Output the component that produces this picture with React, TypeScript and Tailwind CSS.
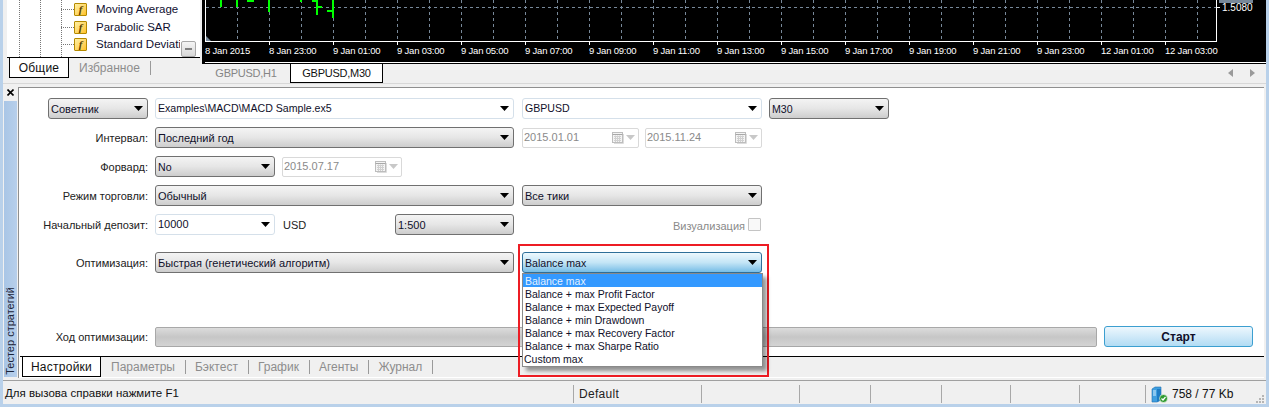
import React from "react";

const FONT = "[font-family:'Liberation_Sans',Arial,sans-serif]";

function Arrow({ color = "#000" }: { color?: string }) {
  return (
    <svg width="9" height="5" viewBox="0 0 9 5" className="shrink-0">
      <path d="M0 0H9L4.5 5Z" fill={color} />
    </svg>
  );
}

function Select({
  w,
  text,
  kind = "select",
}: {
  w: string;
  text: string;
  kind?: "select" | "combo" | "focus";
}) {
  const cls =
    kind === "select"
      ? "border-[#707070] bg-gradient-to-b from-[#f4f4f4] via-[#e6e6e6] to-[#cdcdcd]"
      : kind === "combo"
        ? "border-[#d5e0ea] bg-white"
        : "border-[#2f6f99] bg-gradient-to-b from-[#edf8fd] via-[#c4e5f6] to-[#76bde6]";
  const latin = /^[A-Za-z]/.test(text);
  return (
    <div className={`${w} h-[21px] shrink-0 flex items-center justify-between rounded-[3px] border pl-[2px] pr-[4px] ${cls}`}>
      <span className={`${latin ? "text-[10.6px]" : "text-[11px]"} ${kind === "combo" ? "" : "mt-[2px]"} text-[#10102a] whitespace-nowrap leading-none`}>{text}</span>
      <Arrow />
    </div>
  );
}

function DateBox({ w, text }: { w: string; text: string }) {
  return (
    <div className={`${w} h-[20px] shrink-0 flex items-center justify-between rounded-[2px] border border-[#d9d9d9] bg-white pl-[1px] pr-[3px]`}>
      <span className="text-[11px] text-[#8a8a8a] leading-none">{text}</span>
      <span className="flex items-center gap-[2px]">
        <svg width="12" height="12" viewBox="0 0 12 12">
          <rect x="0.5" y="0.5" width="10" height="10" fill="#f4f4f4" stroke="#bdbdbd" />
          <path d="M0.5 2.5H10.5" stroke="#a8a8a8" />
          <path d="M2 4.5H9M2 6.5H9M2 8.5H9M3.5 3.5V10M5.5 3.5V10M7.5 3.5V10" stroke="#d0d0d0" />
          <path d="M11.5 2V11.5H2" stroke="#dcdcdc" fill="none" />
        </svg>
        <Arrow color="#c8c8c8" />
      </span>
    </div>
  );
}

function Row({ label, children, className = "" }: { label: React.ReactNode; children: React.ReactNode; className?: string }) {
  return (
    <div className={`flex items-center h-[21px] ${className}`}>
      <div className="w-[129px] shrink-0 flex justify-end text-[11px] text-[#222] whitespace-nowrap">
        {typeof label === "string" ? <span className="mt-[2px]">{label}</span> : label}
      </div>
      <div className="ml-[7px] flex items-center">{children}</div>
    </div>
  );
}

function Chart() {
  const ticks: number[] = [];
  for (let x = 237; x <= 1197; x += 32) ticks.push(x);
  const labels: [number, string][] = [
    [205, "8 Jan 2015"],
    [269, "8 Jan 23:00"],
    [333, "9 Jan 01:00"],
    [397, "9 Jan 03:00"],
    [461, "9 Jan 05:00"],
    [525, "9 Jan 07:00"],
    [589, "9 Jan 09:00"],
    [653, "9 Jan 11:00"],
    [717, "9 Jan 13:00"],
    [781, "9 Jan 15:00"],
    [845, "9 Jan 17:00"],
    [909, "9 Jan 19:00"],
    [973, "9 Jan 21:00"],
    [1037, "9 Jan 23:00"],
    [1101, "12 Jan 01:00"],
    [1165, "12 Jan 03:00"],
  ];
  return (
    <svg viewBox="202 0 1064 64" className="block w-[1064px] h-[64px]" shapeRendering="crispEdges">
      <rect x="202" y="0" width="1064" height="64" fill="#000" />
      <path d="M205.5 7.5H1216" stroke="#778899" strokeDasharray="3 3" />
      {ticks.map((x) => (
        <path key={x} d={`M${x + 0.5} 0V41`} stroke="#778899" strokeDasharray="3 3" />
      ))}
      <path d="M205.5 0V41.5H1216.5V0" stroke="#fff" fill="none" />
      <path d="M1216 7.5H1220" stroke="#fff" />
      {labels.map(([x]) => (x > 205 ? <path key={x} d={`M${x + 0.5} 41V45`} stroke="#fff" /> : null))}
      <path d="M206 41V36L211 41Z" fill="#778899" shapeRendering="auto" />
      <g stroke="#00ff00" strokeWidth="2" fill="none">
        <path d="M220.5 0V7M236.5 0V7M247 0.5H254M269 0V12M301 0V2M317 0V15M312 1H317M317 7H322M333 0V18M327 11H333" />
      </g>
      <rect x="1219" y="0" width="34" height="3" fill="#778899" />
      <text x="1222" y="11" fontSize="10" fill="#fff" fontFamily="'Liberation Sans', sans-serif">1.5080</text>
      {labels.map(([x, t]) => (
        <text key={x} x={x} y="54" fontSize="9.5" fill="#fff" fontFamily="'Liberation Sans', sans-serif" letterSpacing="-0.2">{t}</text>
      ))}
      <path d="M205 62.5H1266" stroke="#fff" />
    </svg>
  );
}

function FIcon() {
  return (
    <span className="w-[13px] h-[13px] shrink-0 flex items-center justify-center rounded-[1px] border border-[#b58a00] bg-gradient-to-br from-[#fff0a0] to-[#ffc21a] text-[11px] italic font-bold text-[#5a4200] [font-family:'Liberation_Serif',serif] leading-none">
      f
    </span>
  );
}

function TreeRow({ text }: { text: string }) {
  return (
    <div className="flex items-center h-[17.5px]">
      <span className="w-[13px] border-t border-dotted border-[#777]" />
      <FIcon />
      <span className="ml-[9px] text-[11.5px] text-[#101030] whitespace-nowrap overflow-hidden w-[84px]">{text}</span>
    </div>
  );
}

function Sep() {
  return <span className="inline-block w-px h-[14px] bg-[#9a9a9a]" />;
}

export default function App() {
  const bottomTabs = ["Параметры", "Бэктест", "График", "Агенты", "Журнал"];
  const opts = [
    "Balance max",
    "Balance + max Profit Factor",
    "Balance + max Expected Payoff",
    "Balance + min Drawdown",
    "Balance + max Recovery Factor",
    "Balance + max Sharpe Ratio",
    "Custom max",
  ];
  const dividers = ["w-[98px]", "w-[71px]", "w-[71px]", "w-[69px]", "w-[69px]", "w-[66px]"];
  return (
    <div className={`${FONT} relative w-[1269px] h-[407px] overflow-hidden bg-[#b9d1ea] flex flex-col pl-[3px] pr-[3px] pb-[3px]`}>
      {/* top area */}
      <div className="flex h-[84px] shrink-0 bg-[#f0f0f0] border-b border-[#d8d8d8]">
        <div className="w-[199px] shrink-0 pl-[4px] pr-[2px] flex flex-col">
          <div className="relative h-[58px] bg-white overflow-hidden border-b border-black">
            <span className="absolute left-[12px] top-0 h-full border-l border-dotted border-[#777]" />
            <span className="absolute left-[33px] top-0 h-full border-l border-dotted border-[#777]" />
            <span className="absolute left-[54px] top-0 h-full border-l border-dotted border-[#777]" />
            <div className="pl-[54px] pt-[1px]">
              <TreeRow text="Moving Average" />
              <TreeRow text="Parabolic SAR" />
              <TreeRow text="Standard Deviation" />
            </div>
            <div className="absolute left-[174px] top-[41px] w-[15px] h-[16px] flex items-center justify-center rounded-[2px] border border-[#a8a8a8] bg-gradient-to-b from-[#f5f5f5] to-[#d8d8d8]">
              <span className="w-[7px] h-[2px] bg-[#808080]" />
            </div>
          </div>
          <div className="flex items-center h-[20px] ml-[2px]">
            <div className="w-[60px] h-[20px] bg-white border-x border-b border-black flex items-center justify-center text-[12px] tracking-[0.2px] text-[#111]">
              Общие
            </div>
            <span className="ml-[10px] text-[12px] text-[#8d8d8d]">Избранное</span>
            <span className="ml-[10px] flex"><Sep /></span>
          </div>
        </div>
        <div className="w-[1064px] shrink-0 flex flex-col">
          <Chart />
          <div className="flex h-[19px] items-start">
            <div className="w-[88px] h-[18px] flex items-center justify-center text-[11px] tracking-[-0.25px] text-[#858585]">GBPUSD,H1</div>
            <div className="w-[93px] h-[19px] bg-white border-x border-b border-black flex items-center justify-center text-[11px] tracking-[-0.25px] text-[#111]">GBPUSD,M30</div>
            <div className="ml-auto mr-[11px] h-[18px] flex items-center gap-[17px]">
              <svg width="5" height="8" viewBox="0 0 5 8"><path d="M5 0V8L0 4Z" fill="#9a9a9a" /></svg>
              <svg width="5" height="8" viewBox="0 0 5 8"><path d="M0 0V8L5 4Z" fill="#9a9a9a" /></svg>
            </div>
          </div>
        </div>
      </div>

      {/* tester */}
      <div className="flex-1 flex min-h-0 bg-[#f0f0f0]">
        <div className="w-[15px] shrink-0 flex flex-col">
          <div className="h-[17px] pt-[5px] flex justify-center">
            <svg width="7" height="7" viewBox="0 0 7 7"><path d="M0.5 0.5L6.5 6.5M6.5 0.5L0.5 6.5" stroke="#000" strokeWidth="1.6" /></svg>
          </div>
          <div className="flex-1 ml-[1px] mb-[3px] w-[13px] bg-gradient-to-r from-[#a9c6e6] to-[#b7cfeb] flex items-start justify-center">
            <div className="h-full flex items-end justify-center">
              <span className="[writing-mode:vertical-rl] rotate-180 text-[11px] leading-[13px] text-[#1c2438] whitespace-nowrap pt-[2px]">Тестер стратегий</span>
            </div>
          </div>
        </div>
        <div className="flex-1 flex flex-col mt-[3px] mr-[2px] mb-[2px] min-w-0">
          <div className="flex-1 bg-white border-l border-t border-[#8f8f8f] flex flex-col pt-[10px] min-h-0">
            <Row label={<Select w="w-[100px]" text="Советник" />}>
              <Select w="w-[359px]" text="Examples\MACD\MACD Sample.ex5" kind="combo" />
              <div className="ml-[8px]"><Select w="w-[240px]" text="GBPUSD" kind="combo" /></div>
              <div className="ml-[7px]"><Select w="w-[120px]" text="M30" /></div>
            </Row>
            <Row label="Интервал:" className="mt-[8px]">
              <Select w="w-[359px]" text="Последний год" />
              <div className="ml-[8px] flex gap-[6px]">
                <DateBox w="w-[117px]" text="2015.01.01" />
                <DateBox w="w-[117px]" text="2015.11.24" />
              </div>
            </Row>
            <Row label="Форвард:" className="mt-[8px]">
              <Select w="w-[120px]" text="No" />
              <div className="ml-[7px]"><DateBox w="w-[120px]" text="2015.07.17" /></div>
            </Row>
            <Row label="Режим торговли:" className="mt-[8px]">
              <Select w="w-[359px]" text="Обычный" />
              <div className="ml-[8px]"><Select w="w-[240px]" text="Все тики" /></div>
            </Row>
            <Row label="Начальный депозит:" className="mt-[8px]">
              <Select w="w-[120px]" text="10000" kind="combo" />
              <span className="ml-[8px] mt-[2px] w-[112px] text-[11px] text-[#222]">USD</span>
              <Select w="w-[119px]" text="1:500" />
              <div className="ml-[8px] w-[240px] flex items-center justify-end pr-[1px] gap-[3px]">
                <span className="mt-[3px] text-[11px] text-[#8a8a8a]">Визуализация</span>
                <span className="w-[13px] h-[13px] rounded-[1px] border border-[#c4c4c4] bg-[#f9f9f9]" />
              </div>
            </Row>
            <Row label="Оптимизация:" className="mt-[17px]">
              <Select w="w-[359px]" text="Быстрая (генетический алгоритм)" />
              <div className="ml-[8px] relative">
                <Select w="w-[240px]" text="Balance max" kind="focus" />
                <div className="absolute left-[-4px] top-[-8px] w-[251px] h-[133px] border-2 border-[#ed1c24] z-10" />
                <div className="absolute left-0 top-[21px] w-[241px] h-[94px] bg-white border border-[#8a8a8a] shadow-[4px_4px_4px_rgba(0,0,0,0.4)] z-20 flex flex-col">
                  {opts.map((o, i) => (
                    <div
                      key={o}
                      className={`h-[13px] pt-[2px] flex items-center text-[10.5px] leading-none whitespace-nowrap ${i === 6 ? "pl-[1px]" : "pl-[2px]"} ${i === 0 ? "bg-[#3399ff] text-[#e4f1ff]" : "text-[#10102a]"}`}
                    >
                      {o}
                    </div>
                  ))}
                </div>
              </div>
            </Row>
            <div className="flex items-center h-[21px] mt-[53px]">
              <div className="w-[129px] shrink-0 pt-[2px] text-right text-[11px] text-[#222] whitespace-nowrap">Ход оптимизации:</div>
              <div className="ml-[7px] w-[942px] h-[20px] rounded-[2px] border border-[#a8a8a8] bg-gradient-to-b from-[#dcdcdc] via-[#c6c6c6] to-[#d4d4d4]" />
              <div className="ml-[7px] w-[149px] h-[21px] rounded-[3px] border border-[#3c9fd0] bg-gradient-to-b from-[#edf7fd] to-[#b2dcf4] flex items-center justify-center text-[12px] font-bold text-[#10102a]">
                Старт
              </div>
            </div>
            <div className="mt-[9px] h-[22px] ml-[1px] mr-0 border-t border-black flex bg-[#f0f0f0]">
              <div className="w-[2px] bg-white" />
              <div className="w-[79px] h-[20px] bg-white border-x border-b border-black flex items-center justify-center text-[12px] tracking-[0.25px] text-[#111]">
                Настройки
              </div>
              <div className="flex items-center h-[20px] pl-[10px]">
                {bottomTabs.map((t) => (
                  <React.Fragment key={t}>
                    <span className="text-[12px] text-[#8d8d8d]">{t}</span>
                    <span className="ml-[10px] mr-[9px] flex"><Sep /></span>
                  </React.Fragment>
                ))}
              </div>
            </div>
            <div className="h-[1px] bg-white" />
          </div>
        </div>
      </div>

      {/* status bar */}
      <div className="h-[24px] shrink-0 border-t border-[#a0a0a0] bg-[#f0f0f0] flex items-end pb-[1px]">
        <span className="w-[570px] h-[18px] shrink-0 pl-[2px] flex items-center text-[11.5px] text-[#111] whitespace-nowrap">Для вызова справки нажмите F1</span>
        <div className="w-[128px] h-[18px] shrink-0 border-l border-[#a8a8a8] pl-[5px] flex items-center text-[12px] tracking-[0.3px] text-[#222]">Default</div>
        {dividers.map((w, i) => (
          <div key={i} className={`${w} h-[18px] shrink-0 border-l border-[#a8a8a8]`} />
        ))}
        <div className="h-[18px] flex-1 border-l border-[#a8a8a8] pl-[5px] flex items-center gap-[4px] mr-[1px]">
          <svg width="17" height="17" viewBox="0 0 17 17">
            <path d="M1 3L4 1H10V14L6 16H1Z" fill="#3f9fe0" stroke="#1f6fb0" strokeWidth="0.6" />
            <path d="M6 3H10V14L6 16Z" fill="#1f7cc4" />
            <path d="M2 5H5M2 7H5M2 9H5" stroke="#d8f0ff" />
            <circle cx="12.5" cy="12.5" r="4" fill="#2f9a2f" stroke="#fff" strokeWidth="0.6" />
            <path d="M10.5 12.5L12 14L14.5 11" stroke="#fff" strokeWidth="1.2" fill="none" />
          </svg>
          <span className="text-[12px] text-[#111] whitespace-nowrap">758 / 77 Kb</span>
          <span className="ml-auto self-end mr-[1px] grid grid-cols-3 gap-[1px] w-[8px]">
            {[0, 0, 1, 0, 1, 1, 1, 1, 1].map((v, i) => (
              <span key={i} className={`w-[2px] h-[2px] ${v ? "bg-[#b5b5b5]" : ""}`} />
            ))}
          </span>
        </div>
      </div>
    </div>
  );
}
